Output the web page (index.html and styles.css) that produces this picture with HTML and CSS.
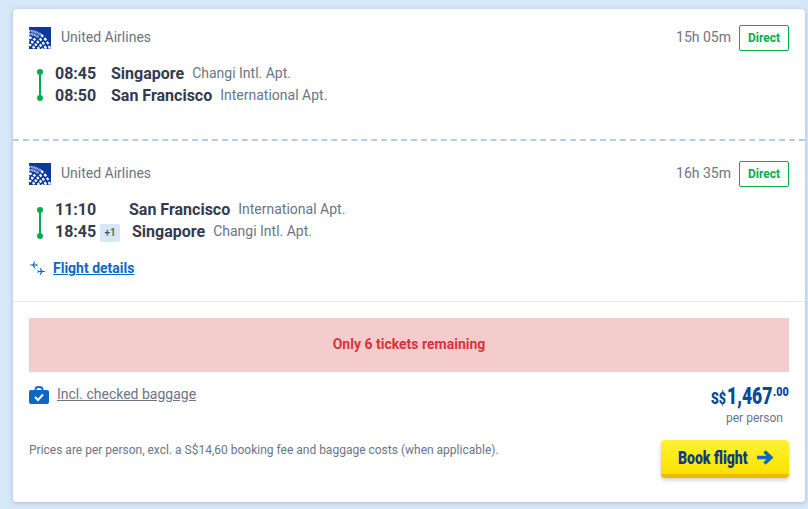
FILE: index.html
```html
<!DOCTYPE html>
<html lang="en">
<head>
<meta charset="utf-8">
<title>Flight</title>
<link rel="stylesheet" href="styles.css">
</head>
<body>
<main class="card">
  <section class="leg leg-out">
    <div class="leg-head">
      <svg class="logo" viewBox="0 0 22 22" aria-hidden="true">
        <rect width="22" height="22" fill="#0b3a9c"/>
        <g fill="none" stroke="#c9d6f0" stroke-width="2.400" stroke-dasharray="1 .6">
          <path d="M0 4Q7 4 12 8"/>
          <path d="M0 7Q5.500 7 9 10"/>
        </g>
        <g fill="none" stroke="#fff" stroke-width="2.300">
          <path d="M12 8Q18 12 21 22" stroke-dasharray="2.800 1.800"/>
          <path d="M9 10Q14 14 17 22" stroke-dasharray="2.800 1.800" stroke-dashoffset="2.300"/>
          <path d="M0 10.500Q8.500 11.500 13.500 22" stroke-dasharray="2.600 1.800"/>
          <path d="M0 14Q6 15 10 22" stroke-dasharray="2.600 1.800" stroke-dashoffset="2.200"/>
          <path d="M0 17.500Q3.500 18.500 6 22" stroke-dasharray="2.400 1.800"/>
        </g>
      </svg>
      <span class="airline">United Airlines</span>
      <span class="duration">15h 05m</span>
      <span class="badge">Direct</span>
    </div>
    <div class="route">
      <div class="line"></div>
      <div class="stops">
        <div class="stop"><b class="time">08:45</b><b class="city">Singapore</b><span class="apt">Changi Intl. Apt.</span></div>
        <div class="stop"><b class="time">08:50</b><b class="city">San Francisco</b><span class="apt">International Apt.</span></div>
      </div>
    </div>
  </section>
  <section class="leg leg-back">
    <div class="leg-head">
      <svg class="logo" viewBox="0 0 22 22" aria-hidden="true">
        <rect width="22" height="22" fill="#0b3a9c"/>
        <g fill="none" stroke="#c9d6f0" stroke-width="2.400" stroke-dasharray="1 .6">
          <path d="M0 4Q7 4 12 8"/>
          <path d="M0 7Q5.500 7 9 10"/>
        </g>
        <g fill="none" stroke="#fff" stroke-width="2.300">
          <path d="M12 8Q18 12 21 22" stroke-dasharray="2.800 1.800"/>
          <path d="M9 10Q14 14 17 22" stroke-dasharray="2.800 1.800" stroke-dashoffset="2.300"/>
          <path d="M0 10.500Q8.500 11.500 13.500 22" stroke-dasharray="2.600 1.800"/>
          <path d="M0 14Q6 15 10 22" stroke-dasharray="2.600 1.800" stroke-dashoffset="2.200"/>
          <path d="M0 17.500Q3.500 18.500 6 22" stroke-dasharray="2.400 1.800"/>
        </g>
      </svg>
      <span class="airline">United Airlines</span>
      <span class="duration">16h 35m</span>
      <span class="badge">Direct</span>
    </div>
    <div class="route">
      <div class="line"></div>
      <div class="stops">
        <div class="stop"><b class="time time-wide">11:10</b><b class="city">San Francisco</b><span class="apt">International Apt.</span></div>
        <div class="stop"><b class="time time-tag">18:45</b><span class="plus">+1</span><b class="city">Singapore</b><span class="apt">Changi Intl. Apt.</span></div>
      </div>
    </div>
    <div class="details">
      <svg class="planes" viewBox="0 0 17 15" aria-hidden="true">
        <path d="M0 4L2 3.500H3.500L5.500 .5H6.300L5.200 3.500H7.200L8 2.600H8.500L8.200 4L8.500 5.400H8L7.200 4.500H5.200L6.300 7.500H5.500L3.500 4.500H2Z" fill="#0b68c4"/>
        <path d="M17 10.500L15 10H13.500L11.500 7H10.700L11.800 10H9.800L9 9.100H8.500L8.800 10.500L8.500 11.900H9L9.800 11H11.800L10.700 14H11.500L13.500 11H15Z" fill="#0b68c4"/>
      </svg>
      <a class="details-link" href="#">Flight details</a>
    </div>
  </section>
  <section class="summary">
    <div class="alert">Only 6 tickets remaining</div>
    <div class="price-row">
      <div class="bag">
        <svg class="bag-icon" viewBox="0 0 20 18" aria-hidden="true">
          <path d="M6.500 5V3.500C6.500 1.800 8 1 10 1S13.500 1.800 13.500 3.500V5" fill="none" stroke="#0b68c4" stroke-width="1.800"/>
          <rect y="4" width="20" height="14" rx="2" fill="#0b68c4"/>
          <path d="M6 11L9 14L14 8.500" fill="none" stroke="#fff" stroke-width="2"/>
        </svg>
        <a class="bag-link" href="#">Incl. checked baggage</a>
      </div>
      <div class="price">
        <div class="amount"><span class="cur">S$</span><span class="whole">1,467</span><span class="cents">.00</span></div>
        <div class="per">per person</div>
      </div>
    </div>
    <div class="foot-row">
      <p class="note">Prices are per person, excl. a S$14,60 booking fee and baggage costs (when applicable).</p>
      <button class="book" type="button">
        <span class="book-label">Book flight</span>
        <svg class="arrow" viewBox="0 0 16 15" aria-hidden="true"><path d="M0 7.500H12.500M7.500 1.500L14 7.500L7.500 13.500" fill="none" stroke="#0b68c4" stroke-width="3.400"/></svg>
      </button>
    </div>
  </section>
</main>
</body>
</html>
```
FILE: styles.css
```css
* { box-sizing: border-box; }
html, body { margin: 0; height: 100%; }
body {
  background: #d6e7f7;
  padding: 9px 3px 7px 13px;
  font-family: Roboto, "Liberation Sans", sans-serif;
  color: #6b7585;
  overflow: hidden;
}
.card {
  background: #fff;
  border-radius: 4px;
  height: 493px;
  box-shadow: 0 1px 4px rgba(50, 80, 120, .3);
}
.leg { padding: 16px 16px 0; }
.leg-out { height: 132px; border-bottom: 2px dashed #b2cdeb; }
.leg-back { height: 161px; padding-top: 20px; border-bottom: 1px solid #e6e9ee; }
.leg-head { display: flex; align-items: center; height: 26px; }
.logo { width: 22px; height: 22px; display: block; }
.airline { margin-left: 10px; margin-bottom: 2px; font-size: 14px; }
.duration { margin-left: auto; margin-bottom: 2px; font-size: 14px; }
.badge {
  margin-left: 8px;
  width: 50px;
  height: 26px;
  padding-bottom: 1px;
  border: 1px solid #04ac4c;
  border-radius: 2px;
  color: #04ac4c;
  font-size: 12px;
  font-weight: 700;
  display: flex;
  align-items: center;
  justify-content: center;
}
.route { display: flex; margin-top: 11px; padding-left: 10px; }
.line {
  position: relative;
  width: 2px;
  height: 26px;
  margin: 10px 0 0;
  background: #04ac4c;
}
.leg-back .line { margin-top: 12px; }
.line::before, .line::after {
  content: "";
  position: absolute;
  left: -2px;
  width: 6px;
  height: 6px;
  border-radius: 50%;
  background: #04ac4c;
}
.line::before { top: -3px; }
.line::after { bottom: -3px; }
.stops { margin-left: 14px; }
.stop { display: flex; align-items: center; height: 22px; white-space: nowrap; }
.time { width: 56px; font-size: 16px; font-weight: 700; color: #323c4e; }
.time-wide { width: 74px; }
.time-tag { width: 45px; }
.city { font-size: 16px; font-weight: 700; color: #323c4e; }
.apt { margin-left: 8px; font-size: 14px; }
.plus {
  width: 20px;
  height: 18px;
  margin-right: 12px;
  margin-top: 3px;
  border-radius: 2px;
  background: #d6e7f7;
  color: #46505f;
  font-size: 10px;
  font-weight: 500;
  display: flex;
  align-items: center;
  justify-content: center;
}
.details { display: flex; align-items: center; margin-top: 16px; height: 20px; }
.planes { width: 17px; height: 15px; }
.details-link { margin-left: 7px; font-size: 14px; font-weight: 700; color: #0b68c4; }
.summary { padding: 16px 16px 0; }
.alert {
  height: 54px;
  padding-bottom: 2px;
  background: #f4cccc;
  color: #d9323f;
  font-size: 14px;
  font-weight: 700;
  display: flex;
  align-items: center;
  justify-content: center;
}
.price-row { display: flex; justify-content: space-between; margin-top: 12px; }
.bag { display: flex; align-items: flex-start; padding-top: 2px; }
.bag-icon { width: 20px; height: 18px; margin-top: 0; }
.bag-link { margin-left: 8px; font-size: 14px; color: #6b7585; }
.price { width: 90px; text-align: right; }
.amount {
  display: flex;
  justify-content: flex-end;
  align-items: flex-start;
  height: 26px;
  color: #0a4a94;
  font-weight: 900;
  white-space: nowrap;
}
.cur { width: 14px; margin-right: 2px; margin-top: 5px; font-size: 16px; line-height: 20px; transform: scaleX(.78); transform-origin: left; }
.whole { width: 46px; font-size: 24px; line-height: 24px; transform: scaleX(.73); transform-origin: left; }
.cents { width: 16px; margin-top: 1px; font-size: 12px; line-height: 14px; transform: scaleX(.9); transform-origin: left; }
.per { margin-top: 1px; padding-right: 6px; font-size: 12px; line-height: 14px; }
.foot-row { display: flex; justify-content: space-between; align-items: flex-start; margin-top: 15px; }
.note { margin: 3px 0 0; font-size: 12px; line-height: 14px; }
.book {
  width: 128px;
  height: 38px;
  border: 0;
  border-bottom: 4px solid #e8bd00;
  border-radius: 4px;
  background: linear-gradient(#fff233, #fbe200);
  box-shadow: 0 2px 4px rgba(0, 0, 0, .2);
  display: flex;
  align-items: center;
  padding: 0 16px 0 17px;
}
.book-label {
  width: 72px;
  font-family: Roboto, "Liberation Sans", sans-serif;
  font-size: 18px;
  font-weight: 900;
  color: #0a3d80;
  white-space: nowrap;
  text-align: left;
  transform: scaleX(.78);
  transform-origin: left;
}
.arrow { width: 16px; height: 15px; margin-left: 7px; }
```
